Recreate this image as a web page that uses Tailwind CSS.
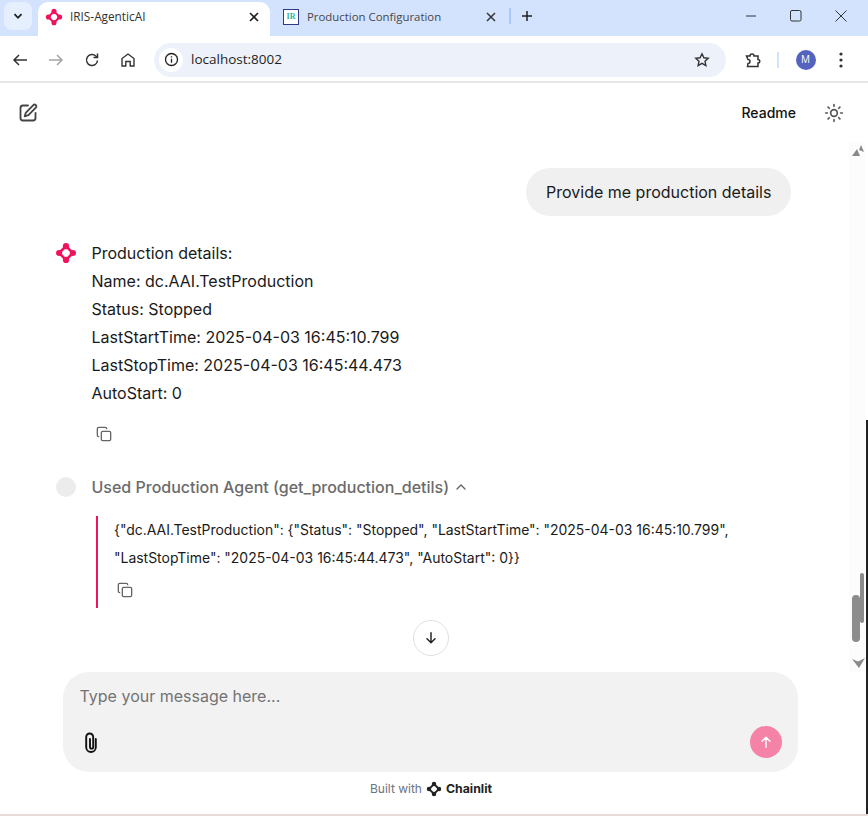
<!DOCTYPE html>
<html lang="en">
<head>
    <meta charset="UTF-8">
    <meta name="viewport" content="width=device-width, initial-scale=1.0">
    <title>IRIS-AgenticAI</title>
    <script src="https://cdn.jsdelivr.net/npm/@tailwindcss/browser@4"></script>
</head>
<body class="bg-white overflow-hidden">
<div class="relative w-[868px] h-[816px] flex flex-col font-['Inter',sans-serif] text-[#1a1a1a]">

    <!-- tab strip -->
    <div class="h-[36px] bg-[#d3e3fd] flex items-start font-['Open_Sans',sans-serif]">
        <div class="w-[28px] h-[28px] mt-[2px] ml-[4px] rounded-lg bg-[#e6effd] flex items-center justify-center">
            <svg width="10" height="10" viewBox="0 0 10 10" fill="none" stroke="#1f1f1f" stroke-width="1.8"><path d="M1.500 3.200 5 6.800l3.500-3.600"/></svg>
        </div>
        <div class="w-[232px] h-[34px] mt-[2px] ml-[6px] bg-white rounded-t-[10px] flex items-center pl-[7px] pr-[10px] pb-[5px]">
            <svg width="18" height="18" viewBox="0 0 24 24" fill="#f0125f" stroke="#f0125f"><path d="M12 4.500 19.500 12 12 19.500 4.500 12Z" fill="none" stroke-width="2.800"/><circle cx="12" cy="4.500" r="3.400" stroke="none"/><circle cx="19.500" cy="12" r="3.400" stroke="none"/><circle cx="12" cy="19.500" r="3.400" stroke="none"/><circle cx="4.500" cy="12" r="3.400" stroke="none"/></svg>
            <span class="ml-[7px] text-[11.800px] text-[#303030] flex-1">IRIS-AgenticAI</span>
            <svg width="12" height="12" viewBox="0 0 12 12" fill="none" stroke="#1f1f1f" stroke-width="1.6"><path d="M2 2l8 8M10 2l-8 8"/></svg>
        </div>
        <div class="w-[238px] h-[34px] mt-[2px] flex items-center pl-[13px] pr-[11px] pb-[5px]">
            <div class="w-[16px] h-[16px] border-[1.5px] border-[#2d3a8c] bg-white flex items-center justify-center text-[8px] font-bold text-[#2bb5a0] font-['Liberation_Serif',serif]">IR</div>
            <span class="ml-[8px] text-[11.400px] text-[#474747] flex-1">Production Configuration</span>
            <svg width="12" height="12" viewBox="0 0 12 12" fill="none" stroke="#333" stroke-width="1.500"><path d="M2 2l8 8M10 2l-8 8"/></svg>
        </div>
        <div class="w-[2px] h-[16px] mt-[8px] ml-[1px] bg-[#a8c7fa]"></div>
        <svg class="mt-[9px] ml-[9px]" width="14" height="14" viewBox="0 0 14 14" fill="none" stroke="#1f1f1f" stroke-width="1.500"><path d="M7 2v10M2 7h10"/></svg>
        <div class="ml-auto flex items-center h-[32px] pr-[21px] gap-[33px]">
            <svg width="12" height="12" viewBox="0 0 12 12" fill="none" stroke="#333" stroke-width="1"><path d="M1 6h10"/></svg>
            <svg width="12" height="12" viewBox="0 0 12 12" fill="none" stroke="#333" stroke-width="1"><rect x=".5" y=".5" width="10.500" height="10.500" rx="1.500"/></svg>
            <svg width="12" height="12" viewBox="0 0 12 12" fill="none" stroke="#333" stroke-width="1"><path d="M.5.500l11 11M11.500.500l-11 11"/></svg>
        </div>
    </div>

    <!-- toolbar -->
    <div class="h-[47px] pt-[2px] border-b-2 border-[#e6e6e6] flex items-center pl-[12px] pr-[15px] font-['Open_Sans',sans-serif]">
        <svg width="16" height="16" viewBox="0 0 16 16" fill="none" stroke="#333" stroke-width="1.500"><path d="M15 8H2M7 3 2 8l5 5"/></svg>
        <svg class="ml-[20px]" width="16" height="16" viewBox="0 0 16 16" fill="none" stroke="#a5a5a5" stroke-width="1.500"><path d="M1 8h13M9 3l5 5-5 5"/></svg>
        <svg class="ml-[20px]" width="16" height="16" viewBox="0 0 16 16" fill="none" stroke="#333" stroke-width="1.500"><path d="M13.500 8.500A5.500 5.500 0 1 1 11.800 4L13.500 5.500"/><path d="M13.500 1.500v4h-4"/></svg>
        <svg class="ml-[20px]" width="16" height="16" viewBox="0 0 16 16" fill="none" stroke="#333" stroke-width="1.400"><path d="M2 14V6.500L8 2l6 4.500V14h-3.800V9.500H5.800V14Z"/></svg>
        <div class="ml-[18px] w-[572px] h-[34px] rounded-full bg-[#edf2fa] flex items-center pl-[5px] pr-[16px]">
            <div class="w-[24px] h-[24px] rounded-full bg-white flex items-center justify-center">
                <svg width="15" height="15" viewBox="0 0 15 15" fill="none" stroke="#222" stroke-width="1.300"><circle cx="7.500" cy="7.500" r="6"/><path d="M7.500 6.800v4M7.500 4.200v1.400"/></svg>
            </div>
            <span class="ml-[8px] text-[13.500px] text-[#1f1f1f] flex-1">localhost:8002</span>
            <svg width="16" height="16" viewBox="0 0 16 16" fill="none" stroke="#333" stroke-width="1.400"><path d="M8 1.800l1.900 4 4.300.500-3.200 3 .900 4.300L8 11.400l-3.900 2.200.900-4.300-3.200-3 4.300-.500Z"/></svg>
        </div>
        <svg class="ml-[18px]" width="18" height="18" viewBox="0 0 18 18" fill="none" stroke="#333" stroke-width="1.500"><path d="M2.500 5H6a2 2 0 0 1 4 0h4v3.500a1.700 1.700 0 0 1 0 3.500v3.500H3.500l.500-3a2 2 0 0 0 0-4Z"/></svg>
        <div class="ml-[15px] w-[1.500px] h-[16px] bg-[#d3e3fd]"></div>
        <div class="ml-[17px] w-[20px] h-[20px] rounded-full bg-[#5563bf] text-white text-[10px] flex items-center justify-center">M</div>
        <svg class="ml-[23px]" width="4" height="16" viewBox="0 0 4 16" fill="#333"><circle cx="2" cy="2" r="1.600"/><circle cx="2" cy="8" r="1.600"/><circle cx="2" cy="14" r="1.600"/></svg>
    </div>

    <!-- app header -->
    <div class="h-[59px] flex items-center justify-between pl-[18px] pr-[24px]">
        <svg width="20" height="20" viewBox="0 0 24 24" fill="none" stroke="#444" stroke-width="2.200" stroke-linecap="round" stroke-linejoin="round"><path d="M12 3H6a3 3 0 0 0-3 3v12a3 3 0 0 0 3 3h12a3 3 0 0 0 3-3v-6"/><path d="M18.400 2.600a2.100 2.100 0 0 1 3 3L12.500 14.500 8 16l1.500-4.500Z"/></svg>
        <div class="flex items-center">
            <span class="text-[14px] font-medium text-[#111]">Readme</span>
            <svg class="ml-[28px]" width="20" height="20" viewBox="0 0 24 24" fill="none" stroke="#555" stroke-width="2" stroke-linecap="round"><circle cx="12" cy="12" r="4"/><path d="M12 2v2M12 20v2M2 12h2M20 12h2M4.900 4.900l1.400 1.400M17.700 17.700l1.400 1.400M4.900 19.100l1.400-1.400M17.700 6.300l1.400-1.400"/></svg>
        </div>
    </div>

    <!-- thread -->
    <div class="flex-1 pt-[26px]">
        <div class="flex justify-end pr-[77px]">
            <div class="h-[48px] w-[265px] rounded-[24px] bg-[#f0f0f0] flex items-center pl-[20px] text-[16px] text-[#1a1a1a]">Provide me production details</div>
        </div>

        <div class="flex mt-[23px] pl-[55px]">
            <svg class="mt-[3px]" width="22" height="22" viewBox="0 0 24 24" fill="#f0125f" stroke="#f0125f"><path d="M12 4.500 19.500 12 12 19.500 4.500 12Z" fill="none" stroke-width="2.800"/><circle cx="12" cy="4.500" r="3.400" stroke="none"/><circle cx="19.500" cy="12" r="3.400" stroke="none"/><circle cx="12" cy="19.500" r="3.400" stroke="none"/><circle cx="4.500" cy="12" r="3.400" stroke="none"/></svg>
            <div class="ml-[14.500px] text-[16px] leading-[28px]">
                <p>Production details:</p>
                <p>Name: dc.AAI.TestProduction</p>
                <p>Status: Stopped</p>
                <p>LastStartTime: 2025-04-03 16:45:10.799</p>
                <p>LastStopTime: 2025-04-03 16:45:44.473</p>
                <p>AutoStart: 0</p>
                <svg class="mt-[19px] ml-[4px]" width="16" height="16" viewBox="0 0 24 24" fill="none" stroke="#666" stroke-width="2" stroke-linecap="round" stroke-linejoin="round"><rect x="8" y="8" width="14" height="14" rx="2"/><path d="M4 16a2 2 0 0 1-2-2V4a2 2 0 0 1 2-2h10a2 2 0 0 1 2 2"/></svg>
            </div>
        </div>

        <div class="flex items-center mt-[33px] pl-[56px] h-[24px]">
            <div class="w-[20px] h-[20px] rounded-full bg-[#ececec]"></div>
            <span class="ml-[15.500px] text-[16px] font-medium text-[#6b6b6b]">Used Production Agent (get_production_detils)</span>
            <svg class="ml-[3.500px]" width="16" height="16" viewBox="0 0 24 24" fill="none" stroke="#666" stroke-width="2" stroke-linecap="round"><path d="m6 15 6-6 6 6"/></svg>
        </div>

        <div class="ml-[96px] mt-[17px] h-[92px] border-l-2 border-[#f0125f] pl-[16px] text-[13.960px] leading-[28px]">
            <p>{"dc.AAI.TestProduction": {"Status": "Stopped", "LastStartTime": "2025-04-03 16:45:10.799",</p>
            <p>"LastStopTime": "2025-04-03 16:45:44.473", "AutoStart": 0}}</p>
            <svg class="mt-[10px] ml-[3px]" width="16" height="16" viewBox="0 0 24 24" fill="none" stroke="#666" stroke-width="2" stroke-linecap="round" stroke-linejoin="round"><rect x="8" y="8" width="14" height="14" rx="2"/><path d="M4 16a2 2 0 0 1-2-2V4a2 2 0 0 1 2-2h10a2 2 0 0 1 2 2"/></svg>
        </div>
    </div>

    <!-- composer -->
    <div class="ml-[63px] mr-[70px] h-[100px] rounded-[26px] bg-[#f2f2f2] flex flex-col justify-between pl-[16.500px] pr-[16px] pt-[13px] pb-[14px]">
        <div class="text-[16px] leading-[22px] text-[#737373]">Type your message here...</div>
        <div class="flex items-center justify-between">
            <svg class="ml-[4.500px]" width="15" height="21" viewBox="0 0 15 21" fill="none" stroke="#111" stroke-width="1.900" stroke-linecap="round"><path d="M6 7v8a1.600 1.600 0 0 0 3.200 0V5a3.500 3.500 0 0 0-7 0v10.200a4.800 4.800 0 0 0 9.600 0V7"/></svg>
            <div class="w-[32px] h-[32px] rounded-full bg-[#f582a7] flex items-center justify-center">
                <svg width="16" height="16" viewBox="0 0 24 24" fill="none" stroke="#fff" stroke-width="2.200" stroke-linecap="round" stroke-linejoin="round"><path d="M12 20V5M6 11l6-6 6 6"/></svg>
            </div>
        </div>
    </div>

    <!-- footer -->
    <div class="h-[44px] flex items-start justify-center pt-[9px] gap-[4px] pr-[6px]">
        <span class="text-[12px] leading-[16px] text-[#6b7280]">Built with</span>
        <svg width="16" height="16" viewBox="0 0 24 24" fill="#222" stroke="#222"><path d="M12 4.500 19.500 12 12 19.500 4.500 12Z" fill="none" stroke-width="2.800"/><circle cx="12" cy="4.500" r="3.400" stroke="none"/><circle cx="19.500" cy="12" r="3.400" stroke="none"/><circle cx="12" cy="19.500" r="3.400" stroke="none"/><circle cx="4.500" cy="12" r="3.400" stroke="none"/></svg>
        <span class="text-[12.300px] leading-[16px] font-bold text-[#222]">Chainlit</span>
    </div>

    <!-- scroll to bottom button -->
    <div class="absolute left-[413px] top-[620px] w-[36px] h-[36px] rounded-full bg-white border border-[#e0e0e0] flex items-center justify-center">
        <svg width="16" height="16" viewBox="0 0 24 24" fill="none" stroke="#222" stroke-width="2.200" stroke-linecap="round" stroke-linejoin="round"><path d="M12 4v15M6 13l6 6 6-6"/></svg>
    </div>

    <!-- page scrollbar -->
    <div class="absolute left-[849px] top-[142px] w-[16px] h-[530px] bg-[#fcfcfc]">
        <svg class="absolute left-[3px] top-[3px]" width="12" height="11" viewBox="0 0 12 11" fill="#8a8a8a"><path d="M0 11 5 4l3 7ZM7 5l2-5 3 7Z"/></svg>
        <div class="absolute left-[11px] top-[431px] w-[4px] h-[50px] rounded-full bg-[#8c8c8c]"></div>
        <div class="absolute left-[3px] top-[453px] w-[8px] h-[47px] rounded-[4px] bg-[#8c8c8c]"></div>
        <svg class="absolute left-[3px] top-[516px]" width="13" height="10" viewBox="0 0 13 10" fill="#8a8a8a"><path d="M0 1 6 3.500 13 0 7 10Z"/></svg>
    </div>

    <!-- window edge -->
    <div class="absolute right-0 top-[420px] w-[2px] h-[396px] bg-[#222]"></div>
    <div class="absolute left-0 bottom-0 w-full h-[2px] bg-[#e8dcd8]"></div>
</div>
</body>
</html>
